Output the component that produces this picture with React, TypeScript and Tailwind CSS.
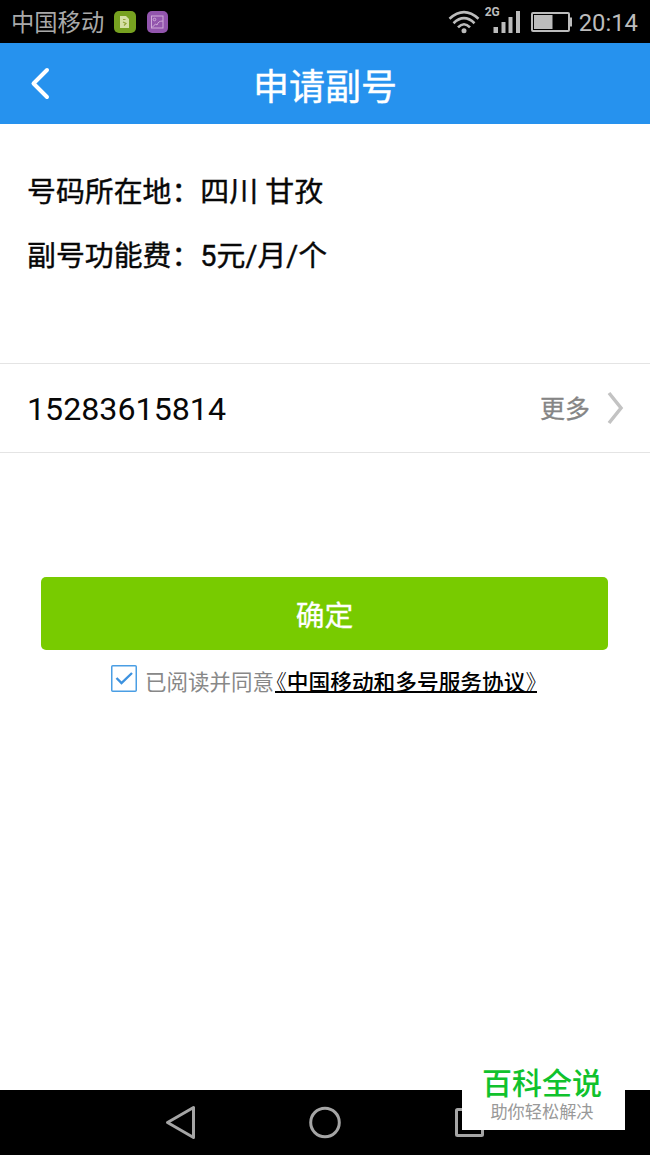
function StatusBar() {
  return (
    <div className="flex h-[43px] items-center bg-black pr-3 pl-[11px] text-[#bcbcbc]">
      <span className="pt-1 text-[23.3px] leading-[39px] text-[#a9a9a9]">中国移动</span>
      <svg className="ml-[10px]" width="22" height="22" viewBox="0 0 22 22" fill="none">
        <rect width="22" height="22" rx="5" fill="#77a120" />
        <path d="M6 5h6l3 3v9H6z" fill="#d5e0a6" />
        <path d="M9 8.5h2.5M9 11l3 1.5-2 2" stroke="#92a43b" strokeWidth="1.2" />
      </svg>
      <svg className="ml-[11px]" width="21" height="22" viewBox="0 0 21 22" fill="none">
        <rect width="21" height="22" rx="5" fill="#9255ad" />
        <g stroke="#d0abd9" strokeWidth="1">
          <rect x="4.5" y="5" width="11.5" height="12" />
          <circle cx="7.5" cy="8.5" r="1.3" />
          <path d="M5 16.5 8.5 13l1.5 1c1-3 2.5-4 6-4" />
        </g>
      </svg>
      <svg className="ml-auto" width="32" height="24" viewBox="0 0 32 24" fill="none" stroke="currentColor" strokeWidth="2.6">
        <path d="M1.5 8.8Q16-4.500 30.5 8.8" />
        <path d="M5.5 13.2Q16 3.200 26.5 13.2" />
        <path d="M10 17.4Q16 11 22 17.4" />
        <circle cx="16" cy="20.8" r="2.5" fill="currentColor" stroke="none" />
      </svg>
      <div className="relative ml-[13px] h-[22px] w-[27px]">
        <span className="absolute -top-[5px] -left-[8px] text-[12px] leading-3 font-bold">2G</span>
        <svg width="27" height="22" viewBox="0 0 27 22" fill="currentColor">
          <path d="M.5 16H5v6H.5zM8.500 11h4v11h-4zM15.500 6h4v16h-4zM23 0h4v22h-4z" />
        </svg>
      </div>
      <svg className="ml-[11px]" width="41" height="20" viewBox="0 0 41 20" fill="none">
        <rect x="1" y="1" width="37" height="18" rx="1" stroke="currentColor" strokeWidth="2" />
        <path d="M3 3h18.500v14H3zM38 5.500h3v9h-3z" fill="currentColor" />
      </svg>
      <span className="ml-[7px] pt-[3px] text-[23.8px] leading-[40px]">20:14</span>
    </div>
  );
}

function Header() {
  return (
    <header className="relative flex h-[81px] items-center justify-center bg-[#2692ee]">
      <button type="button" className="absolute top-[24px] left-[29px]" aria-label="返回">
        <svg width="21" height="34" viewBox="0 0 21 34" fill="none">
          <path d="M18 3 4.500 16.500 18 30" stroke="white" strokeWidth="4" strokeLinecap="round" strokeLinejoin="round" />
        </svg>
      </button>
      <h1 className="pt-[9px] text-[36px] leading-none text-white [-webkit-text-stroke:0.4px_white]">申请副号</h1>
    </header>
  );
}

function InfoLine({ label, value }: { label: string; value: string }) {
  return (
    <div className="flex h-16 items-center text-[28.9px] leading-none text-[#080808] [-webkit-text-stroke:0.4px_#080808]">
      <span>{label}：</span>
      <span>{value}</span>
    </div>
  );
}

function NavBar() {
  return (
    <nav className="relative h-[65px] bg-black">
      <svg width="650" height="65" viewBox="0 0 650 65" fill="none" stroke="#a5a5a5" strokeWidth="3">
        <path d="M167.5 32.5 193.5 17.5V47.5Z" strokeLinejoin="round" />
        <circle cx="325" cy="32.5" r="14.3" />
        <rect x="456.5" y="19.5" width="26" height="26" rx="1" />
      </svg>
      <div className="absolute bottom-[25px] left-[462px] flex h-[80px] w-[163px] flex-col items-center bg-white pt-[17px] pr-[3px]">
        <span className="text-[30px] leading-[34px] font-medium text-[#10c22d]">百科全说</span>
        <span className="pt-px text-[17.2px] leading-[21px] text-[#999]">助你轻松解决</span>
      </div>
    </nav>
  );
}

export default function App() {
  return (
    <div className="flex h-[1155px] w-[650px] flex-col overflow-hidden bg-white font-['Roboto','Noto_Sans_CJK_SC',sans-serif]">
      <StatusBar />
      <Header />
      <main className="flex flex-1 flex-col">
        <section className="h-[239px] pt-[36px] pl-[27px]">
          <InfoLine label="号码所在地" value="四川 甘孜" />
          <InfoLine label="副号功能费" value="5元/月/个" />
        </section>
        <section className="flex h-[90px] items-center border-y border-[#e4e4e4] pr-[26px] pl-[27px]">
          <span className="pt-[3px] text-[32.2px] text-[#080808]">15283615814</span>
          <span className="ml-auto pt-1 text-[25px] text-[#858585] [-webkit-text-stroke:0.3px_#858585]">更多</span>
          <svg className="ml-[17px]" width="17" height="34" viewBox="0 0 17 34" fill="none">
            <path d="M2 2 14 17 2 32" stroke="#c3c3c3" strokeWidth="3.5" />
          </svg>
        </section>
        <button
          type="button"
          className="mt-[124px] ml-[41px] h-[73px] w-[567px] rounded-[5px] bg-[#78cb00] pt-[6px] text-[28.8px] text-white [-webkit-text-stroke:0.3px_white]"
        >
          确定
        </button>
        <div className="mt-[15px] flex items-start pl-[111px] text-[21.5px]">
          <svg width="26" height="27" viewBox="0 0 26 27" fill="none">
            <rect x="0.75" y="0.75" width="24.5" height="25.5" rx="1" stroke="#4a9ee4" strokeWidth="1.5" />
            <path d="m5.500 13 5 5L21 8" stroke="#3d92df" strokeWidth="2.4" />
          </svg>
          <p className="ml-2 flex pt-px whitespace-nowrap text-[#888]">
            <span className="leading-[34px]">已阅读并同意</span>
            <a href="#" className="ml-px flex h-[27px] border-b-2 border-black px-px text-[21.7px] leading-[34px] font-medium text-black">
              <span className="font-light [font-feature-settings:'halt']">《</span>
              <span>中国移动和多号服务协议</span>
              <span className="font-light [font-feature-settings:'halt']">》</span>
            </a>
          </p>
        </div>
      </main>
      <NavBar />
    </div>
  );
}
